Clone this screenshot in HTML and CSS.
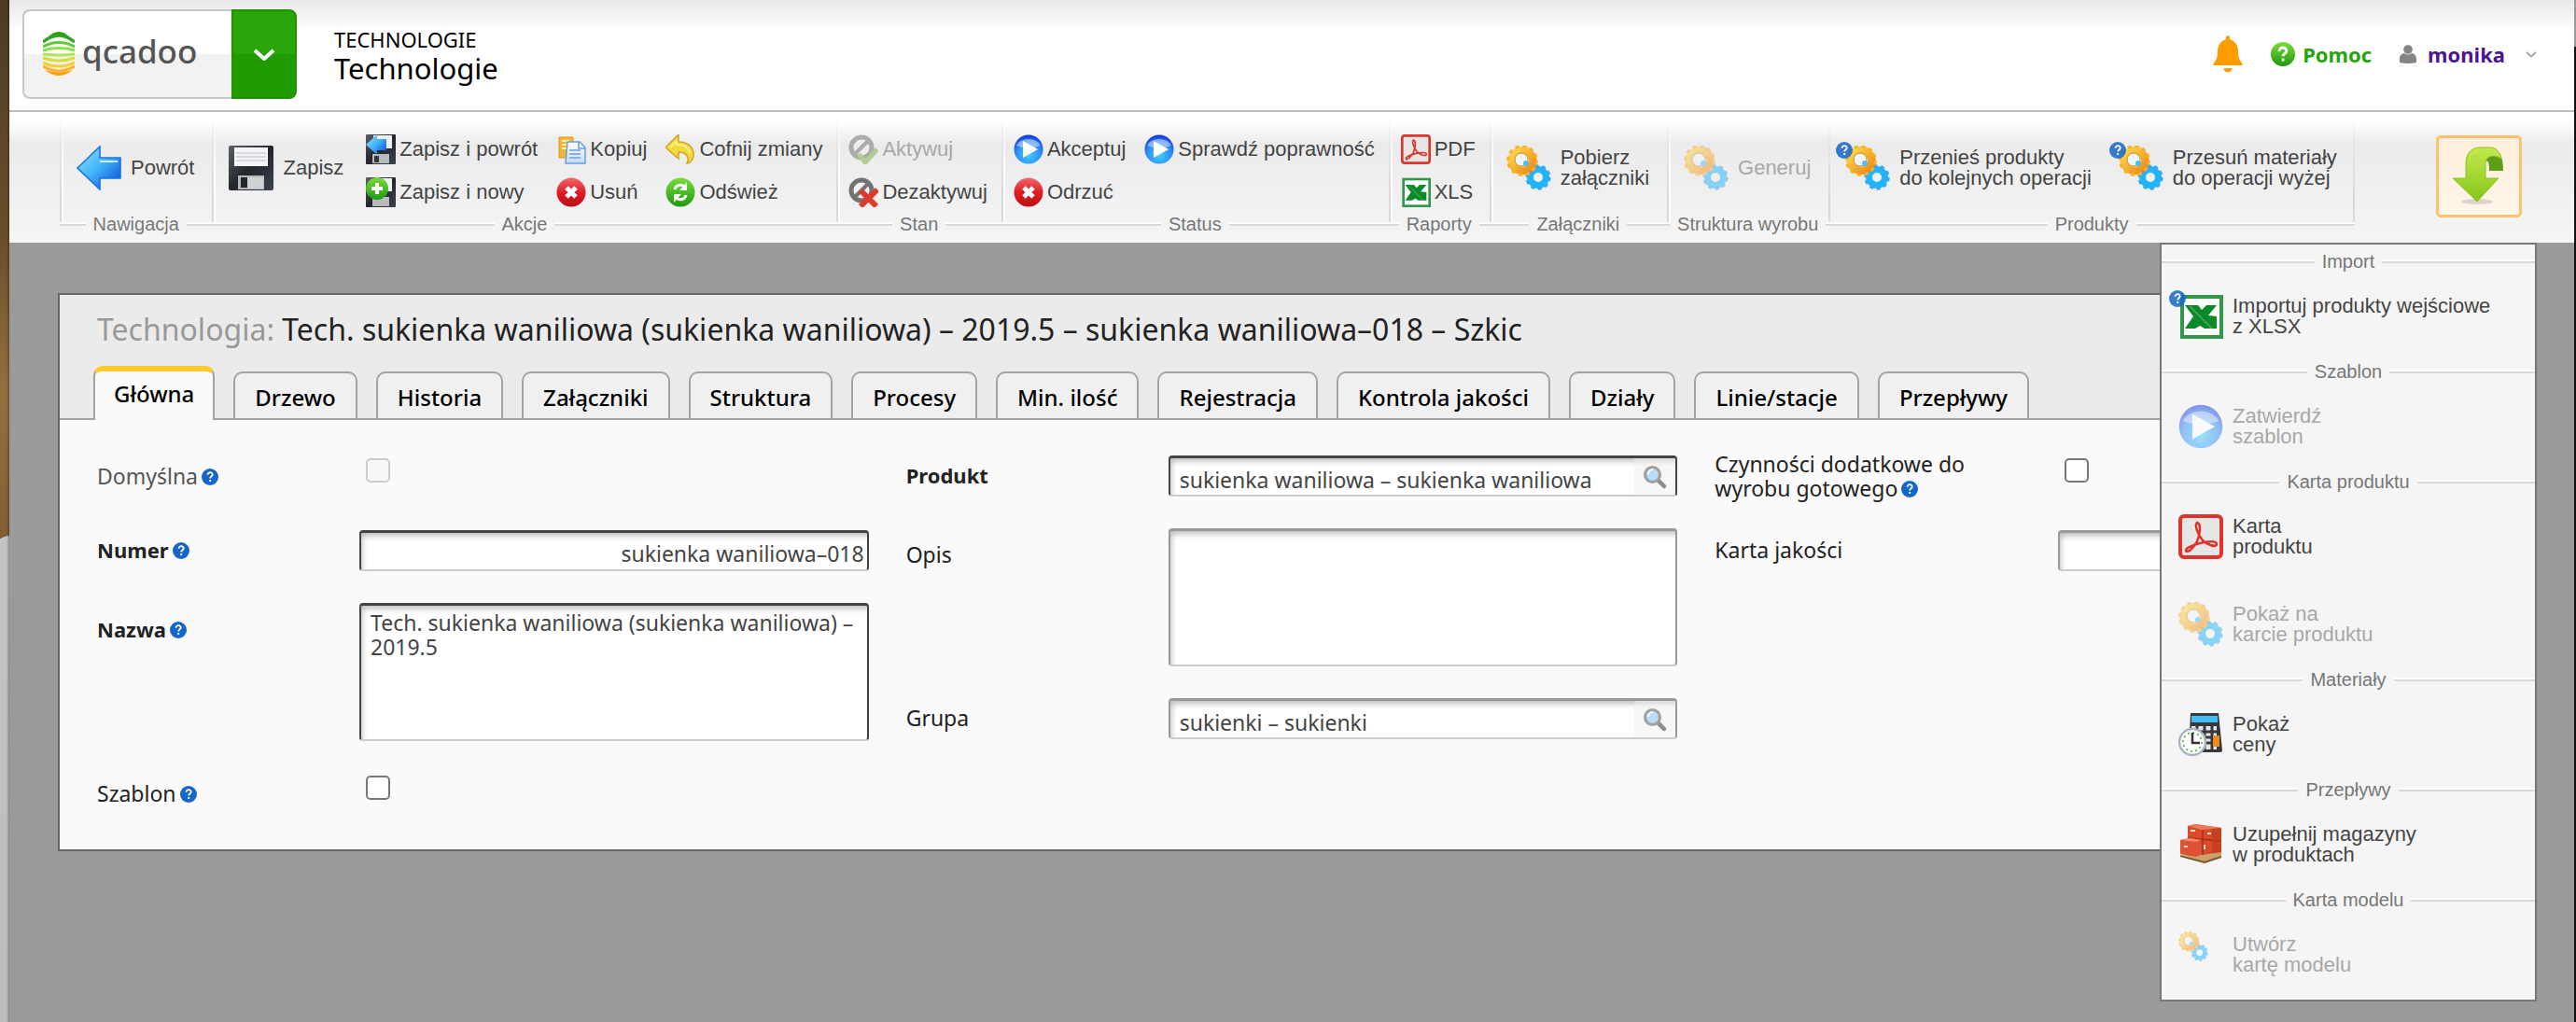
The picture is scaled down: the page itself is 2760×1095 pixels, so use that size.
FILE: index.html
```html
<!DOCTYPE html>
<html lang="pl">
<head>
<meta charset="utf-8">
<title>Technologie</title>
<link rel="stylesheet" href="styles.css">
</head>
<body>
<svg class="defs" aria-hidden="true">
  <defs>
    <linearGradient id="g-blue" x1="0" y1="0" x2="1" y2="1"><stop offset="0" stop-color="#9be4ff"/><stop offset=".5" stop-color="#3fb2f8"/><stop offset="1" stop-color="#0a3fd0"/></linearGradient>
    <radialGradient id="g-play" cx=".5" cy=".7" r=".7"><stop offset="0" stop-color="#3fd0ff"/><stop offset=".6" stop-color="#2f8cf6"/><stop offset="1" stop-color="#1030e0"/></radialGradient>
    <linearGradient id="g-red" x1="0" y1="0" x2="0" y2="1"><stop offset="0" stop-color="#f0696b"/><stop offset=".5" stop-color="#df1c22"/><stop offset="1" stop-color="#b90f12"/></linearGradient>
    <linearGradient id="g-green" x1="0" y1="0" x2="0" y2="1"><stop offset="0" stop-color="#7bdc3c"/><stop offset="1" stop-color="#1d9a10"/></linearGradient>
    <linearGradient id="g-disk" x1="0" y1="0" x2="1" y2="1"><stop offset="0" stop-color="#5b6068"/><stop offset=".5" stop-color="#23262c"/><stop offset="1" stop-color="#3b4150"/></linearGradient>
    <linearGradient id="g-gold" x1="0" y1="0" x2="1" y2="1"><stop offset="0" stop-color="#ffd84a"/><stop offset="1" stop-color="#f08a16"/></linearGradient>
    <linearGradient id="g-lime" x1="0" y1="0" x2="0" y2="1"><stop offset="0" stop-color="#c2ea4a"/><stop offset="1" stop-color="#84c51c"/></linearGradient>
    <linearGradient id="g-paper" x1="0" y1="0" x2="0" y2="1"><stop offset="0" stop-color="#ffffff"/><stop offset="1" stop-color="#c4dcf5"/></linearGradient>
  </defs>
  <symbol id="i-back" viewBox="0 0 48 48"><path d="M1 24 25 1v12h22v22H25v12Z" fill="url(#g-blue)" stroke="#1673e6" stroke-width="1.6"/><path d="M25 17h19" stroke="#c8f0ff" stroke-width="2"/></symbol>
  <symbol id="i-save" viewBox="0 0 48 48"><rect width="48" height="48" rx="2" fill="url(#g-disk)"/><path d="M6 2h36v20H6Z" fill="#f4f5f6"/><path d="M8 8h32M8 12h32M8 16h32" stroke="#cdd0d5" stroke-width="1.5"/><path d="M10 32h28v15H10Z" fill="#b4b6b8"/><path d="M13 34h7v11h-7Z" fill="#23262c"/><path d="M20 34h17v12H20Z" fill="#d0d1d2"/></symbol>
  <symbol id="i-saveback" viewBox="0 0 32 32"><rect width="32" height="32" rx="1" fill="url(#g-disk)"/><path d="M8 1h20v14H8Z" fill="#eef0f2"/><path d="M7 21h18v10H7Z" fill="#b8babc"/><path d="M9 23h5v7H9Z" fill="#33363c"/><path d="M0 11 12 0v5h10v12H12v5Z" fill="url(#g-blue)"/></symbol>
  <symbol id="i-savenew" viewBox="0 0 32 32"><rect width="32" height="32" rx="1" fill="url(#g-disk)"/><path d="M8 1h20v14H8Z" fill="#eef0f2"/><path d="M7 21h18v10H7Z" fill="#b8babc"/><circle cx="12" cy="12" r="12" fill="url(#g-green)"/><path d="M12 6v12M6 12h12" stroke="#fff" stroke-width="4"/></symbol>
  <symbol id="i-copy" viewBox="0 0 32 32"><path d="M3 3h15v22H3Z" fill="#f2b535" stroke="#d9952a"/><path d="M6 7h8M6 11h5M6 15h5" stroke="#fff0b0" stroke-width="2"/><path d="M12 8h13l6 6v17H10Z" fill="url(#g-paper)" stroke="#6a9edb" stroke-width="1.5"/><path d="M24 8v7h7M14 17h12M14 21h12M14 25h12" stroke="#6a9edb" stroke-width="1.6" fill="none"/></symbol>
  <symbol id="i-undo" viewBox="0 0 32 32"><path d="M14 0v8c11 0 17 7 16 15-1 5-4 8-7 8 3-6 0-12-9-12v7L0 14Z" fill="#f3da3c" stroke="#d0a52a" stroke-width="1.5"/><path d="M5 14 12 7v4c6 0 12 2 14 8" stroke="#fff6a8" stroke-width="1.5" fill="none"/></symbol>
  <symbol id="i-delete" viewBox="0 0 32 32"><circle cx="16" cy="16" r="15.5" fill="url(#g-red)"/><path d="m11 11 10 10M21 11 11 21" stroke="#fff" stroke-width="5"/></symbol>
  <symbol id="i-refresh" viewBox="0 0 32 32"><circle cx="16" cy="16" r="15.5" fill="url(#g-green)"/><path d="M10 13c1-5 7-6 10-3M22 19c-1 5-7 6-10 3" fill="none" stroke="#fff" stroke-width="3"/><path d="m23 5v9h-8ZM9 27v-9h8Z" fill="#fff"/></symbol>
  <symbol id="i-on" viewBox="0 0 32 32"><circle cx="14" cy="14" r="11" fill="#f1f1f1" stroke="#6c6c6c" stroke-width="5"/><path d="M7 21 21 7" stroke="#6c6c6c" stroke-width="4"/><path d="m11 21 7 9L31 16" fill="none" stroke="#76b23e" stroke-width="5"/></symbol>
  <symbol id="i-off" viewBox="0 0 32 32"><circle cx="14" cy="14" r="11" fill="#f1f1f1" stroke="#737373" stroke-width="5"/><path d="M7 21 21 7" stroke="#737373" stroke-width="4"/><path d="m13 14 17 17M31 13 13 31" stroke="#e03a2c" stroke-width="6"/></symbol>
  <symbol id="i-play" viewBox="0 0 32 32"><circle cx="16" cy="16" r="15.5" fill="url(#g-play)"/><path d="M3 12a14 11 0 0 1 26 0q-13 5-26 0Z" fill="#fff" opacity=".45"/><path d="m10 7 16 9-16 9Z" fill="#fff"/></symbol>
  <symbol id="i-pdf" viewBox="0 0 48 48"><rect x="2" y="2" width="44" height="44" rx="4" fill="#e6e6e6" stroke="#dd352b" stroke-width="4"/><path d="M20 9c-3 3 1 13 6 19 5 5 15 8 15 4s-11-3-18-1S7 36 8 39s8-2 12-10c3-7 5-19 0-20Z" fill="none" stroke="#dd352b" stroke-width="2.600"/></symbol>
  <symbol id="i-xls" viewBox="0 0 48 48"><rect x="4" y="3" width="42" height="43" fill="#fff" stroke="#31984a" stroke-width="4"/><path d="M7 12h14l4 5 5-5h11l-9 11 9 1v13H28l-5-3-5 3H7l9-13Z" fill="#0b8a2a"/><path d="m12 13 24 24" stroke="#4cae63" stroke-width="1.5"/></symbol>
  <symbol id="i-gears" viewBox="0 0 48 48"><circle cx="34" cy="34" r="8.500" fill="none" stroke="#21b4f8" stroke-width="7"/><circle cx="34" cy="34" r="12.200" fill="none" stroke="#35a8ee" stroke-width="3" stroke-dasharray="4 3.665"/><ellipse cx="17" cy="16" rx="11.500" ry="11" fill="none" stroke="url(#g-gold)" stroke-width="8.500"/><circle cx="17" cy="16" r="15.400" fill="none" stroke="#f6b22c" stroke-width="3" stroke-dasharray="4 4.064"/><circle cx="16" cy="15" r="7" fill="#eef6fb" stroke="#c88a35"/><circle cx="21" cy="19" r="3" fill="#4cc1f0"/></symbol>
  <symbol id="i-help" viewBox="0 0 18 18"><circle cx="9" cy="9" r="9" fill="#1665c8"/><path d="M6.500 6.800c0-3.600 5.400-3.300 5.200-.2-.1 1.700-2.500 1.700-2.500 3.900M9.200 12v2" fill="none" stroke="#fff" stroke-width="1.800"/></symbol>
  <symbol id="i-helpgreen" viewBox="0 0 26 26"><circle cx="13" cy="13" r="13" fill="url(#g-green)"/><path d="M9 10c0-5.500 8-5 7.800-.4-.1 2.700-3.800 2.700-3.800 5.600M13 17.500v3" fill="none" stroke="#fff" stroke-width="2.800"/></symbol>
  <symbol id="i-bell" viewBox="0 0 32 40"><path d="M14 2a2 2 0 0 1 4 0v2c6 2 9 7 9 13 0 8 2 10 4.500 13v2H.5v-2C3 27 5 25 5 17 5 11 8 6 14 4ZM11.500 35h9a4.500 4.500 0 0 1-9 0Z" fill="#ff9d00"/></symbol>
  <symbol id="i-user" viewBox="0 0 18 20"><circle cx="9" cy="5" r="4.800" fill="#858585"/><path d="M0 19v-4c0-4 3-6 5-6q4 3 8 0c2 0 5 2 5 6v4q-9 2-18 0Z" fill="#858585"/></symbol>
  <symbol id="i-chev" viewBox="0 0 24 14"><path d="m2 3 10 9L22 3" fill="none" stroke="currentColor" stroke-width="4"/></symbol>
  <symbol id="i-down" viewBox="0 0 60 64"><ellipse cx="28" cy="59" rx="17" ry="3" fill="#000" opacity=".13"/><path d="M42 2c10 0 14 8 14 24H41c0-9-1-12-4-10Z" fill="#5d9d18"/><path d="M16 34V18C16 7 22 1 32 1h10c7 0 11 6 12 12-8-5-17-3-17 5v16h14L28 59 2 34Z" fill="url(#g-lime)" stroke="#8ac425"/></symbol>
  <symbol id="i-search" viewBox="0 0 26 26"><path d="m16 16 7 7" stroke="#8c8c8c" stroke-width="4.500" stroke-linecap="round"/><circle cx="10.500" cy="10.500" r="8" fill="#b9dcfa" stroke="#a0a0a0" stroke-width="3"/><path d="M6 10a5 5 0 0 1 5-5" stroke="#fff" stroke-width="2" fill="none"/></symbol>
  <symbol id="i-calc" viewBox="0 0 48 48"><path d="M13 1h30l4 40q0 2-3 2H11Z" fill="#35383d"/><path d="M14 4h28v7H14Z" fill="#45bdf2"/><path d="M14 15h27v25H14Z" fill="#e8e8e8"/><path d="M14 21h28M14 27h28M14 33h28M20 14v27M28 14v27M36 14v27" stroke="#35383d" stroke-width="3"/><path d="M37 25h7v12h-7Z" fill="#f08a1d"/><circle cx="15" cy="32" r="14" fill="#fff" stroke="#a8b4c2" stroke-width="2.500"/><circle cx="15" cy="32" r="10" fill="none" stroke="#62b862" stroke-width="2" stroke-dasharray="2 3.200"/><path d="M15 22v11h8" fill="none" stroke="#333" stroke-width="2.500"/></symbol>
  <symbol id="i-boxes" viewBox="0 0 48 48"><path d="m2 34 26 10 18-7V31H3Z" fill="#c9a36a"/><path d="m2 36 26 7 18-6" stroke="#7c5a30" stroke-width="2" fill="none"/><path d="m10 4 8-2 28 4v26l-21 3-15-4Z" fill="#d94a2a"/><path d="m18 2 28 4-21 2-15-4Z" fill="#f0795a"/><path d="M26 8v27M10 17l36 3" stroke="#a93018" stroke-width="1.500"/><path d="m36 7 10-1v26l-10 1Z" fill="#b93a1c" opacity=".6"/><path d="m2 19 10-2 12 2v16l-5 2-17-3Z" fill="#dd5233"/><path d="m2 19 10-2 12 2-5 2Z" fill="#f58a6a"/><path d="M13 9h5M31 12h4M6 26h4M28 24v5" stroke="#ffe0d5" stroke-width="2"/></symbol>
  <symbol id="i-logo" viewBox="0 0 34 48"><path d="M5 7q12-12 24 0-12-5-24 0Z" fill="#2a9a0a"/><g fill="none" stroke-width="3.200"><path d="M0 12q17-14 34 0" stroke="#31a51c"/><path d="M0 17q17-9 34 0" stroke="#62c835"/><path d="M0 21q17-5 34 0" stroke="#8be04b"/><path d="M0 25q17 2 34 0" stroke="#b0e554"/><path d="M0 29q17 6 34 0" stroke="#d2df35"/><path d="M0 34q17 8 34 0" stroke="#f7cf3c"/><path d="M0 38q17 10 34 0" stroke="#ffb52b"/></g><path d="M2 42q15 5 30 0-15 12-30 0Z" fill="#ff9c14"/></symbol>
</svg>

<div class="desk">
  <div class="edge-left"></div>
  <div class="app">
    <header class="top">
      <div class="brand">
        <a class="logo" href="#"><svg class="logo-mark"><use href="#i-logo"/></svg><span>qcadoo</span></a>
        <button class="brand-menu" type="button" aria-label="Menu"><svg class="chev-lg"><use href="#i-chev"/></svg></button>
      </div>
      <div class="crumb"><span class="crumb-group">TECHNOLOGIE</span><span class="crumb-page">Technologie</span></div>
      <nav class="account">
        <a href="#" aria-label="Powiadomienia"><svg class="bell"><use href="#i-bell"/></svg></a>
        <a class="help-link" href="#"><svg class="ic26"><use href="#i-helpgreen"/></svg>Pomoc</a>
        <a class="user-link" href="#"><svg class="user-ic"><use href="#i-user"/></svg>monika<svg class="chev-sm"><use href="#i-chev"/></svg></a>
      </nav>
    </header>

    <div class="ribbon">
      <section class="group">
        <div class="tools"><button class="big" type="button"><svg class="ic48"><use href="#i-back"/></svg><span>Powrót</span></button></div>
        <h2 class="rule">Nawigacja</h2>
      </section>
      <section class="group">
        <div class="tools">
          <button class="big" type="button"><svg class="ic48"><use href="#i-save"/></svg><span>Zapisz</span></button>
          <div class="pair"><button class="small" type="button"><svg><use href="#i-saveback"/></svg>Zapisz i powrót</button><button class="small" type="button"><svg><use href="#i-savenew"/></svg>Zapisz i nowy</button></div>
          <div class="pair"><button class="small" type="button"><svg><use href="#i-copy"/></svg>Kopiuj</button><button class="small" type="button"><svg><use href="#i-delete"/></svg>Usuń</button></div>
          <div class="pair"><button class="small" type="button"><svg><use href="#i-undo"/></svg>Cofnij zmiany</button><button class="small" type="button"><svg><use href="#i-refresh"/></svg>Odśwież</button></div>
        </div>
        <h2 class="rule">Akcje</h2>
      </section>
      <section class="group compact">
        <div class="tools"><div class="pair"><button class="small" type="button" disabled><svg><use href="#i-on"/></svg>Aktywuj</button><button class="small" type="button"><svg><use href="#i-off"/></svg>Dezaktywuj</button></div></div>
        <h2 class="rule">Stan</h2>
      </section>
      <section class="group compact">
        <div class="tools">
          <div class="pair"><button class="small" type="button"><svg><use href="#i-play"/></svg>Akceptuj</button><button class="small" type="button"><svg><use href="#i-delete"/></svg>Odrzuć</button></div>
          <div class="pair"><button class="small" type="button"><svg><use href="#i-play"/></svg>Sprawdź poprawność</button></div>
        </div>
        <h2 class="rule">Status</h2>
      </section>
      <section class="group compact">
        <div class="tools"><div class="pair"><button class="small" type="button"><svg><use href="#i-pdf"/></svg>PDF</button><button class="small" type="button"><svg><use href="#i-xls"/></svg>XLS</button></div></div>
        <h2 class="rule">Raporty</h2>
      </section>
      <section class="group">
        <div class="tools"><button class="big" type="button"><svg class="ic48"><use href="#i-gears"/></svg><span>Pobierz<br>załączniki</span></button></div>
        <h2 class="rule">Załączniki</h2>
      </section>
      <section class="group">
        <div class="tools"><button class="big" type="button" disabled><svg class="ic48"><use href="#i-gears"/></svg><span>Generuj</span></button></div>
        <h2 class="rule">Struktura wyrobu</h2>
      </section>
      <section class="group last">
        <div class="tools wide">
          <button class="big" type="button"><svg class="ic48"><use href="#i-gears"/></svg><span>Przenieś produkty<br>do kolejnych operacji</span><svg class="badge"><use href="#i-help"/></svg></button>
          <button class="big" type="button"><svg class="ic48"><use href="#i-gears"/></svg><span>Przesuń materiały<br>do operacji wyżej</span><svg class="badge"><use href="#i-help"/></svg></button>
        </div>
        <h2 class="rule">Produkty</h2>
      </section>
      <button class="more" type="button" aria-label="Więcej" aria-expanded="true"><svg><use href="#i-down"/></svg></button>

      <div class="menu">
        <h2 class="rule">Import</h2>
        <button class="item" type="button"><svg class="ic48"><use href="#i-xls"/></svg><span>Importuj produkty wejściowe<br>z XLSX</span><svg class="badge"><use href="#i-help"/></svg></button>
        <h2 class="rule">Szablon</h2>
        <button class="item" type="button" disabled><svg class="ic48"><use href="#i-play"/></svg><span>Zatwierdź<br>szablon</span></button>
        <h2 class="rule">Karta produktu</h2>
        <button class="item" type="button"><svg class="ic48"><use href="#i-pdf"/></svg><span>Karta<br>produktu</span></button>
        <button class="item" type="button" disabled><svg class="ic48"><use href="#i-gears"/></svg><span>Pokaż na<br>karcie produktu</span></button>
        <h2 class="rule">Materiały</h2>
        <button class="item" type="button"><svg class="ic48"><use href="#i-calc"/></svg><span>Pokaż<br>ceny</span></button>
        <h2 class="rule">Przepływy</h2>
        <button class="item" type="button"><svg class="ic48"><use href="#i-boxes"/></svg><span>Uzupełnij magazyny<br>w produktach</span></button>
        <h2 class="rule">Karta modelu</h2>
        <button class="item" type="button" disabled><svg class="ic32"><use href="#i-gears"/></svg><span>Utwórz<br>kartę modelu</span></button>
      </div>
    </div>

    <main class="card">
      <div class="card-head">
        <h1><span>Technologia:</span> Tech. sukienka waniliowa (sukienka waniliowa) – 2019.5 – sukienka waniliowa–018 – Szkic</h1>
        <div class="tabs" role="tablist">
          <button class="tab active" role="tab" aria-selected="true" type="button">Główna</button>
          <button class="tab" role="tab" type="button">Drzewo</button>
          <button class="tab" role="tab" type="button">Historia</button>
          <button class="tab" role="tab" type="button">Załączniki</button>
          <button class="tab" role="tab" type="button">Struktura</button>
          <button class="tab" role="tab" type="button">Procesy</button>
          <button class="tab" role="tab" type="button">Min. ilość</button>
          <button class="tab" role="tab" type="button">Rejestracja</button>
          <button class="tab" role="tab" type="button">Kontrola jakości</button>
          <button class="tab" role="tab" type="button">Działy</button>
          <button class="tab" role="tab" type="button">Linie/stacje</button>
          <button class="tab" role="tab" type="button">Przepływy</button>
        </div>
      </div>
      <form class="form">
        <div class="col">
          <div class="row check"><label class="muted" for="f-default">Domyślna<svg class="q"><use href="#i-help"/></svg></label><input type="checkbox" id="f-default" disabled></div>
          <div class="row"><label class="req" for="f-number">Numer<svg class="q"><use href="#i-help"/></svg></label><input class="box req-box num" type="text" id="f-number" value="sukienka waniliowa–018"></div>
          <div class="row tall"><label class="req" for="f-name">Nazwa<svg class="q"><use href="#i-help"/></svg></label><textarea class="box req-box" id="f-name">Tech. sukienka waniliowa (sukienka waniliowa) – 2019.5</textarea></div>
          <div class="row check"><label for="f-template">Szablon<svg class="q"><use href="#i-help"/></svg></label><input type="checkbox" id="f-template"></div>
        </div>
        <div class="col">
          <div class="row"><label class="req" for="f-product">Produkt</label><div class="box lookup req-box"><input type="text" id="f-product" value="sukienka waniliowa – sukienka waniliowa"><button type="button" aria-label="Szukaj"><svg class="ic26"><use href="#i-search"/></svg></button></div></div>
          <div class="row tall"><label for="f-desc">Opis</label><textarea class="box" id="f-desc"></textarea></div>
          <div class="row"><label for="f-group">Grupa</label><div class="box lookup"><input type="text" id="f-group" value="sukienki – sukienki"><button type="button" aria-label="Szukaj"><svg class="ic26"><use href="#i-search"/></svg></button></div></div>
        </div>
        <div class="col long-labels">
          <div class="row check"><label for="f-extra">Czynności dodatkowe do<br>wyrobu gotowego<svg class="q"><use href="#i-help"/></svg></label><input type="checkbox" id="f-extra"></div>
          <div class="row"><label for="f-quality">Karta jakości</label><div class="box lookup"><input type="text" id="f-quality"><button type="button" aria-label="Szukaj"><svg class="ic26"><use href="#i-search"/></svg></button></div></div>
        </div>
      </form>
    </main>
  </div>
  <div class="edge-right"></div>
</div>
</body>
</html>
```
FILE: styles.css
```css
* { box-sizing: border-box; }
body { margin: 0; font-family: "Noto Sans", "Open Sans", sans-serif; font-size: 22px; color: #222; background: #9a9a9a; }
button, input, textarea { font: inherit; color: inherit; margin: 0; }
button { background: none; border: 0; padding: 0; }
a { text-decoration: none; color: inherit; }
h1, h2 { margin: 0; font-weight: 400; }
svg { display: block; flex: none; }
.defs { position: absolute; width: 0; height: 0; }
.ic26 { width: 26px; height: 26px; }
.ic32 { width: 32px; height: 32px; }
.ic48 { width: 48px; height: 48px; }

.desk { display: grid; grid-template-columns: 10px minmax(0, 1fr) 2px; min-height: 100vh; }
.edge-left { background: linear-gradient(90deg, transparent 70%, rgba(0,0,0,.3)), radial-gradient(16px 16px at 10px 590px, #c4c4c4 98%, transparent), linear-gradient(#c4c4c4, #b4b4b4) 0 588px no-repeat, linear-gradient(#4d3b26, #6b4f2c 260px, #95703f 420px, #7f5c33 590px); }
.edge-right { background: linear-gradient(#999 50px, #111 50px); }

.top { display: flex; align-items: flex-start; height: 120px; padding: 10px 40px 0 14px; border-bottom: 2px solid #bbb; background: linear-gradient(#e8e8e8, #fff 34px); }
.brand { display: flex; width: 294px; height: 96px; }
.logo { flex: 1; display: flex; align-items: center; gap: 8px; padding: 0 0 2px 20px; border: 2px solid #c6c6c6; border-right: 0; border-radius: 8px 0 0 8px; background: linear-gradient(#fff 50%, #f2f2f2 50%); color: #555; font-size: 35px; font-weight: 500; line-height: 40px; }
.logo span { padding-bottom: 4px; }
.logo-mark { width: 34px; height: 48px; }
.brand-menu { width: 70px; display: grid; place-items: center; border: 2px solid #1f9200; border-radius: 0 8px 8px 0; background: linear-gradient(#2aa50a 50%, #219c00 50%); color: #fff; }
.chev-lg { width: 24px; height: 14px; }
.crumb { display: flex; flex-direction: column; margin: 19px 0 0 40px; color: #000; }
.crumb-group { line-height: 26px; }
.crumb-page { font-size: 31px; line-height: 36px; }
.account { display: flex; align-items: center; margin: 28px 0 0 auto; font-weight: 700; line-height: 36px; }
.bell { width: 32px; height: 40px; }
.help-link, .user-link { display: flex; align-items: center; gap: 8px; margin-left: 30px; color: #24a50c; }
.user-link { gap: 12px; color: #4b1590; }
.user-ic { width: 18px; height: 20px; }
.chev-sm { width: 12px; height: 8px; margin-left: 10px; color: #aaa; }

.ribbon { position: relative; display: flex; height: 140px; padding: 0 56px 0 54px; background: linear-gradient(#fff 10px, #ebebeb 34px, #f5f5f5); font-family: "Liberation Sans", Arial, sans-serif; color: #444; line-height: 22px; }
.group { display: flex; flex-direction: column; background: linear-gradient(transparent 4px, #d9d9d9 90px) 0 0 / 2px 119px no-repeat, linear-gradient(transparent 4px, #fff 60px) 2px 0 / 2px 119px no-repeat; }
.group.last { background: linear-gradient(transparent 4px, #d9d9d9 90px) 0 0 / 2px 119px no-repeat, linear-gradient(transparent 4px, #d9d9d9 90px) 100% 0 / 2px 119px no-repeat; }
.tools { display: flex; height: 110px; padding: 24px 15px 0 18px; gap: 20px; }
.compact .tools { padding-left: 13px; }
.tools.wide { gap: 25px; }
.big, .item { position: relative; display: flex; align-items: center; gap: 10px; text-align: left; line-height: 22px; white-space: nowrap; }
.big { height: 72px; margin-right: 4px; }
.pair { display: flex; flex-direction: column; gap: 14px; }
.small { display: flex; align-items: center; gap: 4px; height: 32px; white-space: nowrap; }
.small svg { width: 32px; height: 32px; }
button:disabled { color: #a8a8a8; }
button:disabled svg { opacity: .5; }
.rule { display: flex; align-items: center; gap: 8px; height: 20px; font-size: 20px; line-height: 20px; color: #777; white-space: nowrap; }
.rule::before, .rule::after { content: ""; flex: 1; min-width: 2px; height: 4px; background: linear-gradient(#fff 50%, #d9d9d9 50%); }
.more { display: grid; place-items: center; width: 92px; height: 88px; margin: 25px 0 0 auto; border: 3px solid #fbc36f; border-radius: 5px; background: linear-gradient(#ffeedb, #fff6ea); }
.more svg { width: 60px; height: 64px; }

.menu { position: absolute; z-index: 2; top: 140px; right: 40px; width: 404px; padding-bottom: 7px; border: 2px solid #777; background: #f5f5f5; }
.menu .rule { height: 36px; }
.item { width: 100%; height: 82px; padding-left: 18px; }
.item + .item { margin-top: 12px; }
.item .ic32 { align-self: flex-start; margin: 16px 16px 0 0; }
.badge { position: absolute; top: 8px; left: -10px; width: 18px; height: 18px; opacity: .85; }
.item .badge { top: 13px; left: 8px; }

.card { margin: 54px 52px 0; border: 2px solid #666; background: #fafafa; }
.card-head { background: #ebebeb; }
h1 { padding: 17px 40px 0; height: 76px; font-size: 32px; line-height: 40px; white-space: nowrap; }
h1 span { color: #999; }
.tabs { display: flex; align-items: flex-end; gap: 20px; height: 58px; padding-left: 36px; background: linear-gradient(#a3a3a3, #a3a3a3) 0 100% / 100% 2px no-repeat; }
.tab { height: 52px; padding: 4px 21px 0; border: 2px solid #a3a3a3; border-radius: 10px 10px 0 0; background: #f0f0f0; color: #000; font-weight: 500; font-size: 24px; line-height: 40px; white-space: nowrap; }
.tab.active { height: 58px; padding: 0 20px 4px; border-top: 6px solid #ffc92e; border-bottom: 0; background: #fafafa; }

.form { display: grid; grid-template-columns: repeat(3, minmax(0, 1fr)); padding: 38px 0 36px 40px; font-size: 23px; }
.col { display: flex; flex-direction: column; gap: 34px; }
.row { display: grid; grid-template-columns: 281px minmax(0, 1fr); grid-template-rows: 44px; align-items: start; padding-right: 40px; }
.long-labels .row { grid-template-columns: 368px minmax(0, 1fr); padding-right: 0; }
.row.check { grid-template-rows: 46px; }
.row.tall { grid-template-rows: 148px; }
.row label { align-self: center; line-height: 26px; padding-bottom: 2px; }
.row.tall label { align-self: start; padding-top: 15px; }
.req { font-weight: 700; font-size: 22px; }
.muted { color: #555; }
.q { display: inline-block; width: 18px; height: 18px; margin-left: 4px; vertical-align: -1px; }
.box { width: 100%; height: 44px; padding: 0 10px; border: 2px solid #999; border-top-width: 3px; border-bottom-color: #ccc; border-radius: 4px; background: #fff; box-shadow: inset 4px 6px 6px -3px #bbb; font-size: 23px; color: #444; }
.req-box { border-color: #444 #444 #ccc; }
.num { text-align: right; padding: 4px 3px 0; }
textarea.box { display: block; height: 148px; padding-top: 5px; line-height: 26px; resize: none; overflow: hidden; }
.lookup { display: flex; padding: 0; }
.lookup input { flex: 1; min-width: 0; border: 0; background: none; padding: 6px 10px 0; outline: 0; }
.lookup button { width: 44px; display: grid; place-items: center; background: rgba(240,240,240,.5); }
input[type="checkbox"] { appearance: none; width: 26px; height: 26px; margin: 3px 0 0 7px; border: 2px solid #777; border-radius: 5px; background: #fff; }
input[type="checkbox"]:disabled { border-color: #ccc; background: #f8f8f8; }
```
